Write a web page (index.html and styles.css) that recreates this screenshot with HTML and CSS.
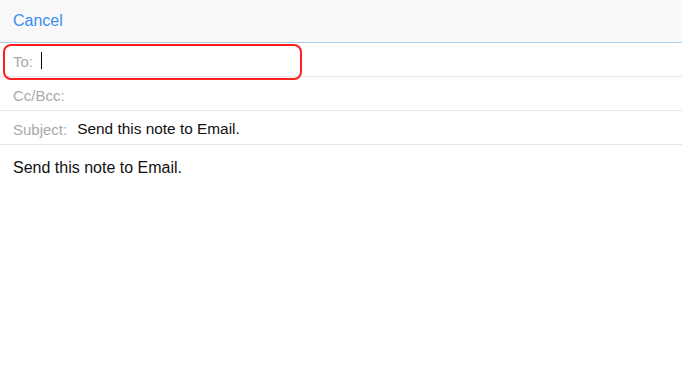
FILE: index.html
```html
<!DOCTYPE html>
<html lang="en">
<head>
	<meta charset="UTF-8">
	<title>New Message</title>
	<link rel="stylesheet" href="styles.css">
</head>
<body>
	<div id="compose">
		<div class="topbar">
			<span class="cancel">Cancel</span>
		</div>
		<div class="row">
			<span class="label">To:</span>
			<span class="caret"></span>
		</div>
		<div class="row">
			<span class="label">Cc/Bcc:</span>
		</div>
		<div class="row">
			<span class="label">Subject:</span>
			<span class="value">Send this note to Email.</span>
		</div>
		<div class="body">Send this note to Email.</div>
		<div class="highlight"></div>
	</div>
</body>
</html>
```

FILE: styles.css
```css
html,body{
	margin:0;
	padding:0;
	background:#fff;
}
#compose{
	position:relative;
	width:682px;
	height:380px;
	font-family:"Liberation Sans", Arial, sans-serif;
}
.topbar{
	height:42px;
	display:flex;
	align-items:center;
	padding:0 0 0 13px;
	background:#f9f9f9;
	border-bottom:1px solid #a6cbe8;
}
.cancel{
	font-size:16px;
	color:#3a8ef0;
}
.row{
	height:30px;
	display:flex;
	align-items:center;
	padding:3px 0 0 13px;
	border-bottom:1px solid #e6e6e6;
}
.label{
	font-size:15px;
	color:#a9a9a9;
}
.caret{
	display:block;
	width:1px;
	height:17px;
	background:#000;
	margin:-2px 0 0 8px;
}
.value{
	font-size:15.4px;
	color:#111;
	margin-left:10px;
}
.body{
	padding:14px 0 0 13px;
	font-size:16px;
	color:#111;
}
.highlight{
	position:absolute;
	left:3px;
	top:44px;
	width:295px;
	height:32px;
	border:2px solid #ff1f1f;
	border-radius:8px;
}
```
